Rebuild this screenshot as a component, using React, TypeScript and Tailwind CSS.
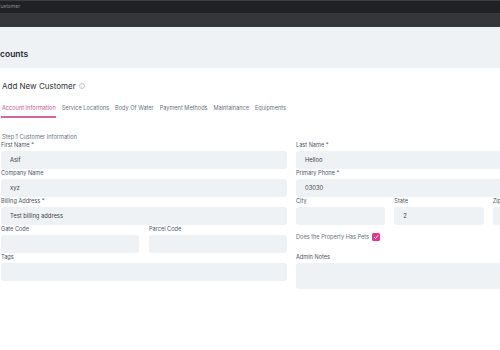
import React from "react";

const tabs = ["Account Information", "Service Locations", "Body Of Water", "Payment Methods", "Maintainance", "Equipments"];

function Label({ children }: { children: React.ReactNode }) {
    return <div className="h-[8px] mb-[2px] text-[5.6px] leading-[8px] text-[#4b5563]">{children}</div>;
}

function Field({ label, value, className = "" }: { label: string; value?: string; className?: string }) {
    return (
        <div className={className}>
            <Label>{label}</Label>
            <div className="h-[18px] rounded-[3px] bg-[#eff2f5] pl-[9px] flex items-center text-[5.8px] text-[#3f3f46]">{value}</div>
        </div>
    );
}

export default function App() {
    return (
        <div className="w-[500px] h-[350px] overflow-hidden bg-white font-['Inter',sans-serif]">
            <div className="h-px bg-[#3c3d40]" />
            <div className="h-[12px] bg-[#202124] flex items-center">
                <span className="ml-[-3px] text-[5px] text-[#8b8c90]">Customer</span>
            </div>
            <div className="h-[14px] bg-[#35363a]" />
            <div className="h-[41px] bg-[#eef2f5] flex items-end pb-[8px]">
                <span className="ml-[-11px] text-[8.5px] leading-[12px] font-semibold text-[#1f2937]">Accounts</span>
            </div>

            <div className="w-[582px] pl-px">
                <div className="mt-[12px] h-[12px] flex items-center pl-px">
                    <span className="text-[8px] leading-[12px] text-[#2d3139]">Add New Customer</span>
                    <span className="ml-[3px] w-[6px] h-[6px] rounded-full border-[0.7px] border-[#c3c7cc] text-[4px] leading-[5px] text-[#c3c7cc] flex items-center justify-center">i</span>
                </div>

                <div className="mt-[12px] flex gap-[6px]">
                    {tabs.map((t, i) => (
                        <div
                            key={t}
                            className={
                                i === 0
                                    ? "pl-px pb-[4px] border-b-2 border-[#d862a2] text-[5.6px] leading-[8px] text-[#d0559a]"
                                    : "pb-[4px] border-b-2 border-transparent text-[5.6px] leading-[8px] text-[#6b7280]"
                            }
                        >
                            {t}
                        </div>
                    ))}
                </div>

                <div className="mt-[15px] pl-px h-[8px] text-[5.6px] leading-[8px] text-[#6b7280]">Step 1 Customer Information</div>

                <div className="grid grid-cols-2 gap-x-[9px]">
                    <div className="flex flex-col">
                        <Field label="First Name *" value="Asif" />
                        <Field label="Company Name" value="xyz" />
                        <Field label="Billing Address *" value="Test billing address" />
                        <div className="grid grid-cols-2 gap-x-[10px]">
                            <Field label="Gate Code" />
                            <Field label="Parcel Code" />
                        </div>
                        <Field label="Tags" />
                    </div>
                    <div className="flex flex-col">
                        <Field label="Last Name *" value="Helloo" />
                        <Field label="Primary Phone *" value="03030" />
                        <div className="grid grid-cols-3 gap-x-[9px]">
                            <Field label="City" />
                            <Field label="State" value="2" />
                            <Field label="Zip" />
                        </div>
                        <div className="h-[28px] pt-[8px] flex items-start gap-[3px]">
                            <span className="text-[5.6px] leading-[8px] text-[#6b7280]">Does the Property Has Pets</span>
                            <span className="w-[8px] h-[8px] rounded-[1.5px] bg-[#e0368e] flex items-center justify-center">
                                <svg width="6" height="6" viewBox="0 0 12 12" fill="none">
                                    <path d="M2.5 6.5L5 9L9.5 3.5" stroke="white" strokeWidth="1.8" strokeLinecap="round" strokeLinejoin="round" />
                                </svg>
                            </span>
                        </div>
                        <div>
                            <Label>Admin Notes</Label>
                            <div className="h-[26px] rounded-[3px] bg-[#eff2f5]" />
                        </div>
                    </div>
                </div>
            </div>
        </div>
    );
}
